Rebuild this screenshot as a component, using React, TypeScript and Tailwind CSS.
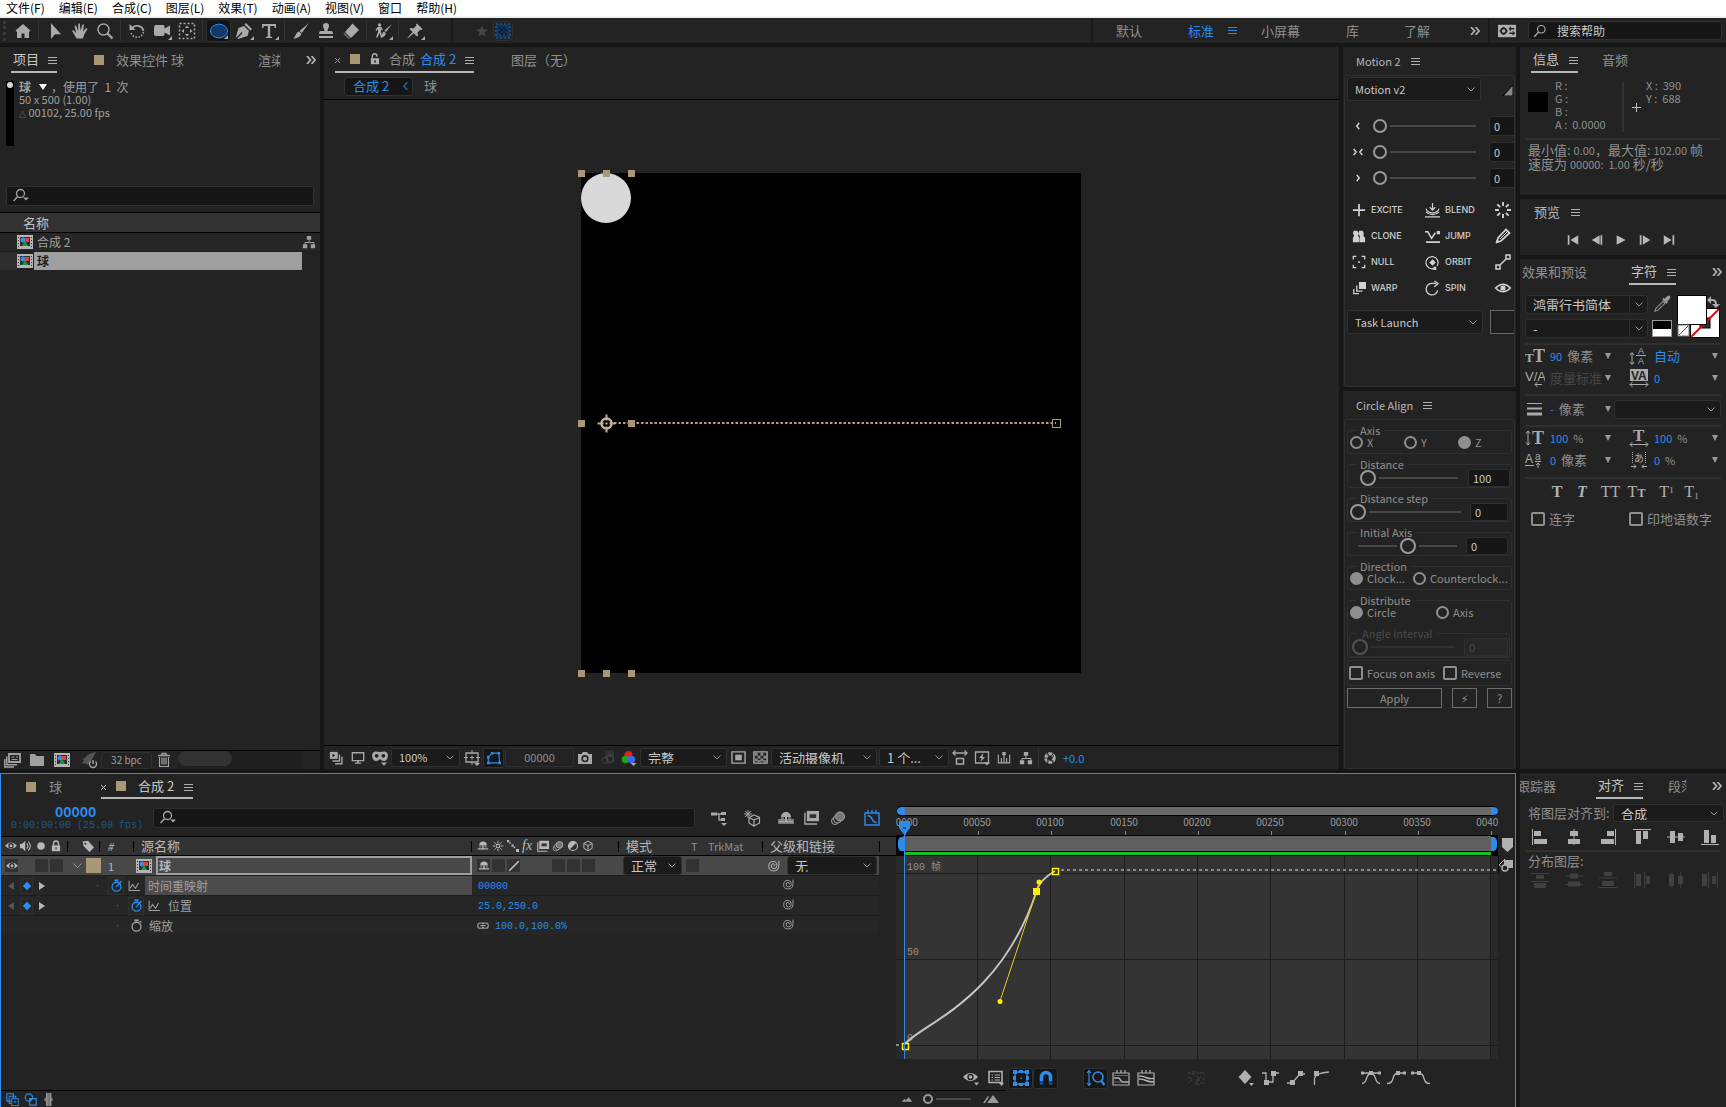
import type { ReactNode } from 'react';

const S = { fill: 'none', stroke: 'currentColor' };

const filmIcon = (
  <>
    <path d="M0 1h16v14H0z" fill="#b4b4b4" />
    <path d="M1 3h1v1H1zM1 6h1v1H1zM1 9h1v1H1zM1 12h1v1H1zM14 3h1v1h-1zM14 6h1v1h-1zM14 9h1v1h-1zM14 12h1v1h-1z" fill="#333" />
    <path d="M3 3h10v9H3z" fill="#2a3038" />
    <circle cx="6" cy="6" r="2.500" fill="#3c8be0" />
    <path d="M8 4h4v4H8z" fill="#e04038" />
    <path d="M5 12l3-5 3 5z" fill="#1e9a34" />
  </>
);

const shyIcon = (
  <>
    <path d="M3 7a5 5 0 0110 0z" />
    <path d="M7 7h2v5H7zM1 11h14v1.500H1z" />
    <path d="M4 8.500v2M12 8.500v2M3 8h3M10 8h3" {...S} />
  </>
);

const balls = (
  <>
    <circle cx="5" cy="11" r="3.500" {...S} />
    <circle cx="7.500" cy="9" r="4" fill="#232323" stroke="currentColor" />
    <circle cx="10" cy="6.500" r="4.500" fill="#777" stroke="currentColor" />
  </>
);

const cube = <path d="M8 1.500l5.500 3v6.500L8 14.500 2.500 11V4.500zM2.500 4.500L8 7.500l5.500-3M8 7.500v7" {...S} strokeWidth="1.300" />;

// All icons share a 16 unit box
const icons: Record<string, ReactNode> = {
  home: <path d="M8 1L.500 7.500 2 9v6h4.500v-4.500h3V15H14V9l1.500-1.500z" />,
  arrow: <path d="M4 0v16l4-4.700H14z" />,
  hand: <path d="M4.500 15.500L.500 8.500c-.5-1 .8-1.600 1.600-.7L4.400 10.500 2.600 3.500c-.2-1.200 1.300-1.500 1.700-.3L6.200 8 6.300 1.200c.1-1.200 1.500-1.200 1.600 0L8.600 7.700 10.300 2c.4-1.100 1.800-.7 1.600.4L11 8.800 13.700 5.600c.8-.8 2 0 1.400 1L12 12l-1 3.500z" />,
  zoom: <><circle cx="6.500" cy="6.500" r="5.500" {...S} strokeWidth="1.400" /><path d="M10.500 10.500l5 5" {...S} strokeWidth="2.200" /></>,
  rotate: <><path d="M2.500 6A6.500 6.500 0 0114.500 8" {...S} strokeWidth="1.700" /><path d="M14.500 9A6.500 6.500 0 012 10" {...S} strokeWidth="1.500" strokeDasharray="1.500 1.500" /><path d="M.500 1v6h6z" /></>,
  camera: <path d="M0 4q0-2 2-2h7q1.500 0 1.500 2v1.500L16 2.500v10l-5.500-3V11q0 2-1.500 2H2q-2 0-2-2z" />,
  panBehind: <><path d="M.5.500h15v15H.500z" {...S} strokeWidth="1.500" strokeDasharray="2 2" /><path d="M8 2.500l2 2.500H6zM8 13.500l2-2.500H6zM2.500 8l2.500-2v4zM13.500 8l-2.500-2v4z" /></>,
  ellipse: <ellipse cx="8" cy="8" rx="8.500" ry="6.800" fill="#12396b" stroke="#2d8ceb" />,
  pen: <path d="M10 0l6 6-1.500 1.500-6-6zM8 3L13 8l-1.500 5L2 16l-.6-.6L6.500 10l-.8-1L.6 14.500 0 14l2.500-9z" />,
  type: <path d="M1 1h14v4h-1.300l-.5-2H9.200v10.500l2 .4V15H4.800v-1.100l2-.4V3H2.800l-.5 2H1z" />,
  brush: <path d="M16 0L8.800 10 6.500 8zM6 8.500l2.300 2C8 14 4 15.500 0 15.500 3 13.500 2.500 9.500 6 8.500z" />,
  stamp: <path d="M8 0a3 3 0 013 3c0 1.800-1.500 2.500-1.500 5H13q2 0 2 3H1q0-3 2-3h3.500C6.500 5.500 5 4.800 5 3a3 3 0 013-3zM1 13h14v2H1z" />,
  eraser: <><path d="M9.500.500L16 7l-8 8L2 9z" /><path d="M1.500 9.500l6 6-2.200.3L.3 11z" fill="#666" /></>,
  roto: <><circle cx="4.500" cy="2" r="1.700" /><path d="M2.500 4h4l1.500 3-1 .6L6 6v3l1.500 5.500H6L4.500 10l-2 4.500H1L3 9V6L1.500 8 .500 7z" /><path d="M17 1L11 9 9.300 7.500zM9 8.500l1.700 1.500c0 2.800-2.500 4.500-5 4.500 1.700-1.500 1-5 3.300-6z" /></>,
  pin: <path d="M10 .500l5.500 5.500-1 1-1.200-.3L10.500 9.500 11 12.500l-1 1L6.700 10.200 1 15.200l-.5-.5L5.600 9 2.500 6l1-1 3 .5L9.300 2.700 9 1.500z" />,
  star: <path d="M8 .500l2.200 5.200 5.600.4-4.300 3.600 1.400 5.500L8 12.200l-4.900 3 1.400-5.500L.2 6.100l5.600-.4z" />,
  checker: <><path d="M1 1h14v14H1z" fill="#14345a" /><path d="M1 1h14v14H1z" {...S} strokeWidth="2" strokeDasharray="2 2" /><path d="M4 4h2v2H4zM8 4h2v2H8zM6 6h2v2H6zM10 6h2v2h-2zM4 8h2v2H4zM8 8h2v2H8zM6 10h2v2H6zM10 10h2v2h-2z" fill="#0c1c30" /></>,
  sync: <><path d="M0 2.500h16v11H0z" /><circle cx="5" cy="8" r="2.300" fill="none" stroke="#232323" strokeWidth="1.500" /><path d="M5 4.500v1M5 10.500v1M1.500 8h1M7.500 8h1" stroke="#232323" strokeWidth="1.500" /><path d="M10 6h4.500M10 10h4.500" stroke="#232323" strokeWidth="1.300" /><path d="M11.500 4.300L10 6l1.500 1.700M13 8.300l1.500 1.700-1.500 1.700" stroke="#232323" fill="none" /></>,
  search: <><circle cx="9.500" cy="6" r="4.300" {...S} strokeWidth="1.300" /><path d="M6.500 9l-5 5.500" {...S} strokeWidth="1.600" /></>,
  searchMenu: <><circle cx="7.500" cy="5.500" r="4" {...S} strokeWidth="1.300" /><path d="M4.700 8.500L.500 13" {...S} strokeWidth="1.500" /><path d="M10 9.500h6l-3 3z" /></>,
  film: filmIcon,
  flow: <path d="M5.500 1h5v4.500h-5zM1 10.500h5V15H1zM10 10.500h5V15h-5zM7.500 5.500h1V8H14v2.500h-1V9H4v1.500H3V8h4.500z" />,
  footage: <><path d="M5 2h11v8H5z" {...S} strokeWidth="1.800" /><path d="M7.500 5h3M12 5h2M7.500 7.500h6" {...S} /><path d="M2.800 4.500v8.200H13M.8 7v8H10" {...S} strokeWidth="1.500" /></>,
  folder: <path d="M1 2h5l1.500 2H15v10H1z" />,
  rocket: <><path d="M15 0C9 1 6 3 4 6L1 7l2 1-2 4 3-1 2 2 4-4z" fill="#555" /><path d="M9.500 9.500a3.500 3.500 0 105 0M12 8v4" {...S} strokeWidth="1.500" /></>,
  trash: <><path d="M2 3.500h12M6 3V1.500h4V3" {...S} strokeWidth="1.300" /><path d="M3.500 5v9.500h9V5M6 5.500v7M8 5.500v7M10 5.500v7" {...S} strokeWidth="1.200" /></>,
  unlock: <><path d="M2.500 7h11v8h-11z" /><path d="M4.500 7V4a3 3 0 016 0v1" {...S} strokeWidth="1.800" /><path d="M7 9.500h2v3H7z" fill="#232323" /></>,
  lock: <><path d="M2.500 7h11v8h-11z" /><path d="M4.800 7V4.500a3.200 3.200 0 016.400 0V7" {...S} strokeWidth="1.800" /><path d="M7.300 9.500h1.500v3H7.300z" fill="#333" /></>,
  playStack: <><path d="M1 1h9v8H1z" /><path d="M4 3v4l3-2z" fill="#232323" /><path d="M12 4v7.500H4M14.800 6.500v8H7" {...S} strokeWidth="1.600" /></>,
  monitor: <><path d="M1.500 2h13v9h-13z" {...S} strokeWidth="1.500" /><path d="M7 11h2v2h2.500v1.500h-7V13H7z" /></>,
  mask: <><path d="M0 5q1-4 4-3.500 4 .8 8 0 3-.5 4 3.500-.5 6-4 6-2.500 0-4-2-1.500 2-4 2-3.500 0-4-6z" /><circle cx="4.700" cy="5.800" r="1.900" fill="#232323" /><circle cx="11.300" cy="5.800" r="1.900" fill="#232323" /><path d="M9 12.500h6l-3 3.300z" /></>,
  safeZones: <><path d="M2 3h12v9H2z" {...S} strokeWidth="1.300" /><path d="M8 0v4M8 11v4M0 7.500h4M12 7.500h4M6 7.500h4M8 5.500v4" {...S} /><path d="M10 13h6l-3 3z" /></>,
  maskPath: <><path d="M1.500 13.500V7L6 2.500h7.500l1 11z" {...S} strokeWidth="1.300" /><path d="M0 5.500h3v3H0zM4.500 1h3v3h-3zM12 1h3v3h-3zM0 12h3v3H0zM13 12h3v3h-3z" /></>,
  snapshot: <><path d="M1 4h3.500L6 2h4l1.500 2H15v10H1z" /><circle cx="8" cy="8.700" r="2.800" fill="none" stroke="#232323" strokeWidth="1.600" /></>,
  showSnapshot: <><path d="M6 1h9v6H6z" fill="#333" /><circle cx="6" cy="10.500" r="3" {...S} /><circle cx="11" cy="9" r="3.500" {...S} strokeWidth="1.500" /></>,
  rgb: <><circle cx="7.500" cy="5" r="4" fill="#f01818" /><circle cx="4.500" cy="9.500" r="3.700" fill="#18a818" /><circle cx="10.500" cy="9.500" r="3.700" fill="#3c68f0" /><path d="M9.500 13h6l-3 3z" /></>,
  roi: <><path d="M1 2h14v12H1z" {...S} strokeWidth="1.500" /><path d="M4.500 5h7v6h-7z" /></>,
  grid: <><path d="M1 2h14v12H1z" {...S} strokeWidth="1.500" /><path d="M2 3h3v3H2zM8 3h3v3H8zM5 6h3v3H5zM11 6h3v3h-3zM2 9h3v3H2zM8 9h3v3H8zM5 11h3v2H5zM11 11h3v2h-3z" fill="#888" /></>,
  ratio: <><path d="M1 3h14M3.500.500L1 3l2.500 2.500M12.500.500L15 3l-2.500 2.500" {...S} strokeWidth="1.300" /><path d="M4.500 8.500h7v5.500h-7z" {...S} strokeWidth="1.500" /></>,
  fast: <><path d="M1.500 2h13v11h-13z" {...S} strokeWidth="1.300" /><path d="M9.500 3L5 8h2.500L6.500 12 11 7H8.500z" /><path d="M10 12.500h6l-3 3z" /></>,
  timelineBtn: <><path d="M1.500 4v9.500h13V4M5 8v5M8 5v8M11 8v5" {...S} strokeWidth="1.300" /><path d="M6 1h4v3L8 6 6 4z" /></>,
  aperture: <><circle cx="8" cy="8" r="5.500" {...S} strokeWidth="4.500" strokeDasharray="4.800 1" /><path d="M3 3l4 2M13 4l-2 4M13 12l-5-1M4 13l1-5" stroke="#232323" /></>,
  chainLeft: <path d="M10 3L6 8l4 5" {...S} strokeWidth="2.500" />,
  chainRight: <path d="M6 3l4 5-4 5" {...S} strokeWidth="2.500" />,
  chainBoth: <path d="M1 3l4 5-4 5M15 3l-4 5 4 5" {...S} strokeWidth="2.500" />,
  plus: <path d="M8 1v14M1 8h14" {...S} strokeWidth="2" />,
  blend: <><path d="M8 0v7M5 4.500l3 3 3-3M1 6c2 6 12 6 14 0M1 9.500c4 4 10 4 14 0" {...S} strokeWidth="1.300" /><path d="M0 14h16v1.500H0z" /></>,
  burst: <path d="M8 0v4M8 12v4M0 8h4M12 8h4M2.300 2.300l2.900 2.900M10.800 10.800l2.900 2.900M2.300 13.700l2.900-2.900M10.800 5.200l2.900-2.900" {...S} strokeWidth="1.900" />,
  clone: <path d="M8 2h4l1.500 3L13 8l2 2v5H9V8L7.500 6zM2 2h4l1.500 2.500L7 8l1.500 2v5H1v-5l1.500-2L1 4.500z" />,
  jump: <><path d="M0 3h3l4 7 4-6" {...S} strokeWidth="1.600" /><path d="M12.500 2H16v3.500h-3.500zM1 13h15v1.800H1z" /></>,
  pencil: <><path d="M2 14l1-4 8-8.500L14.500 5 6 13z" {...S} strokeWidth="1.800" /><path d="M5 11l7-7M1 15l3-1-2-2z" {...S} /></>,
  nullBox: <><path d="M1.500 5V1.500H5M11 1.500h3.500V5M14.500 11v3.500H11M5 14.500H1.500V11" {...S} strokeWidth="1.500" /><path d="M7 7h2v2H7z" /></>,
  orbit: <><path d="M10 14.200a6.500 6.500 0 113-2.500" {...S} strokeWidth="1.300" /><path d="M8 4.500L11.500 8 8 11.500 4.500 8zM9 12.500h3V16H9z" /></>,
  link2: <><path d="M1 11h4v4H1zM11 1h4v4h-4zM5 11l6-6" {...S} strokeWidth="1.500" /></>,
  warp: <><path d="M8 1h8v8H8z" /><path d="M5.500 5v6.500H12M2 9v5.500h6" {...S} strokeWidth="1.500" /></>,
  spin: <><path d="M13.500 10A6.200 6.200 0 118 2.500h4" {...S} strokeWidth="1.400" /><path d="M10 0l4 2.700L10 6" {...S} strokeWidth="1.400" /></>,
  eye: <><path d="M.5 8Q8 .500 15.500 8 8 15.500.500 8z" {...S} strokeWidth="1.400" /><circle cx="8" cy="8" r="2.600" /></>,
  eyeSolid: <><path d="M0 7.500Q8-1 16 7.500 8 16 0 7.500z" /><circle cx="8" cy="7.500" r="3.600" fill="#232323" /><circle cx="8" cy="7.500" r="2" /></>,
  eyeMenu: <><path d="M0 7Q7.500-1 15 7 7.500 15 0 7z" /><circle cx="7.500" cy="7" r="3.200" fill="#232323" /><circle cx="7.500" cy="7" r="1.800" /><path d="M11 12.500h5l-2.500 3z" /></>,
  first: <path d="M2 2.500h2v11H2zM14 2.500v11L5 8z" />,
  stepBack: <path d="M12 2.500h2v11h-2zM11 2.500v11L2 8z" />,
  play: <path d="M3 2.500v11L13.500 8z" />,
  stepFwd: <path d="M2 2.500h2v11H2zM5.500 2.500v11L14 8z" />,
  last: <path d="M12 2.500h2v11h-2zM2 2.500v11L11 8z" />,
  dropper: <><path d="M10 3.500L12.500 1q1.500-1 2.500 0t0 2.500L12.500 6l.8.800-1.500 1.500L7.700 4.200l1.500-1.500z" /><path d="M8.500 6l1.800 1.800L3.500 14.500l-2.500.8.700-2.600z" {...S} /></>,
  speaker: <><path d="M0 5h3l4-4v14l-4-4H0z" /><path d="M9 4.500q3 3.500 0 7M11 2q5.500 6 0 12" {...S} strokeWidth="1.400" /></>,
  dot: <circle cx="8" cy="8" r="5" />,
  tag: <><path d="M1 2l7-1 8 9-6 6-8-8z" /><circle cx="4.500" cy="5" r="1.300" fill="#333" /></>,
  shy: shyIcon,
  sun: <><circle cx="8" cy="8" r="2.500" {...S} strokeWidth="1.500" /><path d="M8 1v3M8 12v3M1 8h3M12 8h3M3 3l2 2M11 11l2 2M3 13l2-2M11 5l2-2" {...S} strokeWidth="1.300" /></>,
  dashes: <path d="M0 0h3v3H0zM3 3h2v2H3zM6 6h3v3H6zM9 9h2v2H9zM12 12h4v4h-4z" />,
  frames: <><path d="M3 1h13v11H3z" /><path d="M6 4.500h7v4H6z" fill="#333" /><path d="M1 3v12h13" {...S} strokeWidth="1.500" /></>,
  balls,
  half: <><circle cx="8" cy="8" r="6" {...S} strokeWidth="1.500" /><path d="M12.500 3.500A6 6 0 103.500 12.500z" /></>,
  cube,
  slash: <path d="M1.500 14.500l13-13" {...S} strokeWidth="2" />,
  spiral: <path d="M14.500 1v6q0 7.500-7 7.500T1 8q0-6 6-6 5 0 5 5.500 0 4-4 4Q4.500 11.500 4.500 8T7.500 5q1.800.2 1.500 3" {...S} strokeWidth="1.300" />,
  stopwatch: <><circle cx="8" cy="9.500" r="5.500" {...S} strokeWidth="1.600" /><path d="M5.500.500h5V3h-5z" /><path d="M12 2.500l2 2" {...S} strokeWidth="1.500" /></>,
  stopwatchOn: <><circle cx="8" cy="9.500" r="5.500" {...S} strokeWidth="1.600" /><path d="M5.500.500h5V3h-5z" /><path d="M7.500 10L14 2.500" {...S} strokeWidth="1.600" /></>,
  curve: <path d="M1.500 1v13H16M3 11l3-5 4 5 4-7" {...S} strokeWidth="1.400" />,
  link: <path d="M9 5.500Q8 4 6 4H4Q1 4 1 7.500T4 11h2q2 0 3-1.500M7 9.500Q8 11 10 11h2q3 0 3-3.500T12 4h-2Q8 4 7 5.500M4.500 7.500h7" {...S} strokeWidth="1.600" />,
  miniFlow: <><path d="M0 2.500h6v3H0zM10 2h5v3h-5zM10 8h4v3h-4z" /><path d="M6 4h4M8 4v6h3" {...S} strokeWidth="1.300" /><path d="M10 13h6l-3 3z" /></>,
  draft: <><path d="M4 0v8M0 4h8M1 1l6 6M1 7l6-6" {...S} /><path d="M10 5l5.500 2.500v5.500L10 16l-5-3V7.500zM5 7.500l5 2.500 5.500-2.500M10 10v6" {...S} strokeWidth="1.200" /></>,
  shyBar: <><path d="M0 9h16v5H0z" fill="#777" />{shyIcon}</>,
  graphEd: <><path d="M1 3h14v12H1zM4 0v3M8 0v3M12 0v3" {...S} strokeWidth="1.400" /><path d="M3.500 5.500Q7 6 8 9t4.500 3.500" {...S} strokeWidth="1.400" /></>,
  list: <><path d="M1 1.500h13v11H1z" {...S} strokeWidth="1.600" /><path d="M3.500 5h1.500M6.500 5H12M3.500 7.500H5M6.500 7.500H12M3.500 10H5M6.500 10H12" {...S} /><path d="M11 13h5l-2.500 3z" /></>,
  bbox: <><path d="M2 2h12v12H2z" {...S} strokeWidth="1.300" /><path d="M0 0h4v4H0zM6 0h4v3H6zM12 0h4v4h-4zM0 6h3v4H0zM13 6h3v4h-3zM0 12h4v4H0zM6 13h4v3H6zM12 12h4v4h-4zM7.500 7.500h1.500v1.500H7.500z" /></>,
  magnet: <><path d="M3.500 11V7a4.500 4.500 0 019 0v4" {...S} strokeWidth="3.600" /><path d="M1.700 11h3.600v4H1.700zM10.700 11h3.600v4h-3.600z" fill="#174a80" /></>,
  autoZoom: <><path d="M1 1v14M-1 3l2-2.500L3 3M-1 13l2 2.500L3 13" {...S} strokeWidth="1.200" /><circle cx="10" cy="7" r="5" {...S} strokeWidth="1.600" /><path d="M13.500 11l3 4" {...S} strokeWidth="2.200" /></>,
  fitSel: <><path d="M0 3h16v12H0zM4 0v3M8 0v3M12 0v3" {...S} strokeWidth="1.200" /><path d="M1 8h5l3 4h7" {...S} strokeWidth="1.400" /><path d="M1 5.500h15M1 12h8" stroke="#666" /></>,
  fitAll: <><path d="M0 3h16v12H0zM4 0v3M8 0v3M12 0v3" {...S} strokeWidth="1.200" /><path d="M1 6q4 0 7 1.500t8 1M1 9q4 0 7 1.500t8 1.500" {...S} strokeWidth="1.400" /></>,
  separate: <path d="M-1 3h4M4 1l3 4M7 1L4 5M8 3h9M-1 8q3-2 5 1M9 6l2 3 2-3M11 9v2M14 9h3M0 13l4-3M7 10h4l-4 4h4M12 13h5" {...S} />,
  diamond: <><path d="M7 0l6.500 7L7 14 .500 7z" /><path d="M11 13h5l-2.500 3z" /></>,
  kHold: <><path d="M-1 3h4v9h4M7 12h3V3h6" {...S} strokeWidth="1.300" /><path d="M1 10h5v5H1zM8 1h5v5H8z" /></>,
  kLinear: <><path d="M-1 13h5L12 4h5" {...S} strokeWidth="1.300" /><path d="M2 10h5v5H2zM10 1h5v5h-5z" /></>,
  kBezier: <><path d="M1.500 15V8Q3 3 16 2" {...S} strokeWidth="1.300" /><path d="M1 1h5v5H1z" /></>,
  easy: <><path d="M-2 3h20M-1 13.500q3 0 4.500-5T8 3.500t4.500 5 4.500 5" {...S} strokeWidth="1.300" /><path d="M6 1h4v4H6zM-2 1.500h3v3h-3zM15 1.500h3v3h-3z" /></>,
  easeIn: <><path d="M-1 13.500q5 0 6-5t5-5.500h7" {...S} strokeWidth="1.300" /><path d="M8 1h4v4H8zM15 1.500h3v3h-3z" /></>,
  easeOut: <><path d="M17 13.500q-5 0-6-5T6 3H-1" {...S} strokeWidth="1.300" /><path d="M4 1h4v4H4zM-2 1.500h3v3h-3z" /></>,
  swPanel: <><path d="M1 1h8v9H1zM4 4h8v9H4z" {...S} strokeWidth="1.300" /><path d="M7 7h8v8.500H7z" fill="#161616" stroke="currentColor" strokeWidth="1.300" /><path d="M11 9v4M9 11h4" {...S} /></>,
  modePanel: <><circle cx="6" cy="5.500" r="4.500" {...S} strokeWidth="1.400" /><path d="M7 7h8v8H7z" {...S} strokeWidth="1.400" /><path d="M7 7h3.500L7 10z" /></>,
  inOut: <><path d="M5 0h6v5l3 3-3 3v5H5v-5L2 8l3-3z" fill="#777" /><path d="M5 0h1.500v16H5zM10 0h1.500v16H10z" /></>,
  alLeft: <path d="M0 0h1v16H0zM2 2h7v5H2zM2 10h13v5H2z" />,
  alCenter: <path d="M7.500 0h1v16h-1zM4 2h8v5H4zM2 10h12v5H2z" />,
  alRight: <path d="M15 0h1v16h-1zM7 2h7v5H7zM1 10h13v5H1z" />,
  alTop: <path d="M-1 0h18v1H-1zM2 2h5v13H2zM9 2h5v8H9z" />,
  alMid: <path d="M-1 7.500h18v1H-1zM2 2h5v12H2zM10 4h5v8h-5z" />,
  alBottom: <path d="M-1 15h18v1H-1zM2 1h5v13H2zM9 6h5v8H9z" />,
  diTop: <path d="M-1 1h18v1H-1zM4 3h8v4H4zM-1 9h18v1H-1zM2 11h12v5H2z" />,
  diMid: <path d="M-1 3.500h18v1H-1zM4 1.500h8v5H4zM-1 12h18v1H-1zM2 9.500h12v5H2z" />,
  diBottom: <path d="M4 0h8v4H4zM-1 5.500h18v1H-1zM2 9h12v5H2zM-1 15h18v1H-1z" />,
  diLeft: <path d="M0 0h1v16H0zM2 2h5v12H2zM10 0h1v16h-1zM12 4h4v8h-4z" />,
  diCenter: <path d="M3.500 0h1v16h-1zM1 2h5v12H1zM12 0h1v16h-1zM10 4h5v8h-5z" />,
  diRight: <path d="M0 2h5v12H0zM6 0h1v16H6zM10 4h4v8h-4zM15 0h1v16h-1z" />,
  hillSmall: <path d="M2 11l3-3 2 1 3-3 4 5z" />,
  hillBig: <path d="M0 12L5 5l1 1-4 6zM4 12l6-8 6 8z" />,
};

function Icon({ name, className = 'size-4' }: { name: string; className?: string }) {
  return (
    <svg viewBox="0 0 16 16" fill="currentColor" className={`shrink-0 overflow-visible ${className}`} aria-hidden="true">
      {icons[name]}
    </svg>
  );
}

function MenuLines({ className = 'text-[#b0b0b0]' }: { className?: string }) {
  return (
    <svg width="9" height="9" viewBox="0 0 9 9" className={`shrink-0 ${className}`} aria-hidden="true">
      <path d="M0 1.500h9M0 4.500h9M0 7.500h9" stroke="currentColor" />
    </svg>
  );
}

const tabLines = 'mt-[3px] text-[#b0b0b0]';

function More() {
  return (
    <svg width="10" height="8" viewBox="0 0 10 8" className="shrink-0 text-[#b0b0b0]" aria-hidden="true">
      <path d="M1 0l3.500 4L1 8M5.500 0L9 4 5.500 8" fill="none" stroke="currentColor" strokeWidth="1.800" />
    </svg>
  );
}

function Close() {
  return (
    <svg width="5" height="5" viewBox="0 0 5 5" className="mt-[3px] mr-[10px] shrink-0" aria-hidden="true">
      <path d="M0 0l5 5M5 0L0 5" stroke="currentColor" />
    </svg>
  );
}

function Swatch() {
  return <span className="size-[10px] shrink-0 bg-[#a99776]" />;
}

function Tool({ name, corner, active }: { name: string; corner?: boolean; active?: boolean }) {
  return (
    <button aria-label={name} className={`relative flex h-[23px] w-[25px] items-center justify-center rounded-sm ${active ? 'border border-[#303030] bg-[#141414]' : ''}`}>
      <Icon name={name} />
      {corner && <span className="absolute right-[2px] bottom-[2px] border-b-[4px] border-l-[4px] border-b-[#aaa] border-l-transparent" />}
    </button>
  );
}

interface SelectProps {
  value: string;
  label: string;
  className: string;
  divider?: boolean;
}

function Select({ value, label, className, divider }: SelectProps) {
  return (
    <div className={`relative shrink-0 rounded-[3px] border border-[#303030] bg-[#1b1b1b] text-[#c8c8c8] ${className}`}>
      <select aria-label={label} className="block h-full w-full appearance-none bg-transparent pl-[7px] leading-none outline-none">
        <option>{value}</option>
      </select>
      <span className={`pointer-events-none absolute inset-y-0 right-0 flex w-[18px] items-center justify-center ${divider ? 'border-l border-[#303030]' : ''}`}>
        <svg width="8" height="5" viewBox="0 0 8 5" aria-hidden="true">
          <path d="M.5.500L4 4 7.500.500" fill="none" stroke="#999" />
        </svg>
      </span>
    </div>
  );
}

function Slider({ label, value, className, disabled }: { label: string; value: number; className: string; disabled?: boolean }) {
  return (
    <input
      type="range"
      aria-label={label}
      defaultValue={value}
      disabled={disabled}
      className={`m-0 h-4 shrink-0 appearance-none overflow-hidden bg-transparent disabled:opacity-40 [&::-webkit-slider-runnable-track]:h-[2px] [&::-webkit-slider-runnable-track]:bg-[#484848] [&::-webkit-slider-thumb]:appearance-none [&::-webkit-slider-thumb]:rounded-full [&::-webkit-slider-thumb]:border-2 [&::-webkit-slider-thumb]:border-[#999] [&::-webkit-slider-thumb]:bg-[#232323] [&::-webkit-slider-thumb]:shadow-[0_0_0_3px_#232323] ${className}`}
    />
  );
}

const thumbSmall = '[&::-webkit-slider-thumb]:mt-[-6px] [&::-webkit-slider-thumb]:size-[14px]';
const thumbLarge = '[&::-webkit-slider-thumb]:mt-[-7px] [&::-webkit-slider-thumb]:size-4';

function NumberBox({ label, value, className, disabled }: { label: string; value: string; className: string; disabled?: boolean }) {
  return (
    <input
      type="text"
      aria-label={label}
      defaultValue={value}
      disabled={disabled}
      className={`shrink-0 rounded-[3px] border border-[#2f2f2f] bg-[#161616] pl-[4px] text-[11px] leading-none text-[#c8c8c8] outline-none disabled:bg-[#272727] disabled:text-[#4a4a4a] ${className}`}
    />
  );
}

function Radio({ group, label, checked, className = '' }: { group: string; label: string; checked?: boolean; className?: string }) {
  return (
    <label className={`flex shrink-0 items-center gap-1 ${className}`}>
      <input type="radio" name={group} defaultChecked={checked} className="size-[13px] appearance-none rounded-full border-2 border-[#8f8f8f] checked:bg-[#8f8f8f]" />
      {label}
    </label>
  );
}

function Check({ label, className = '' }: { label: string; className?: string }) {
  return (
    <label className={`flex shrink-0 items-center gap-1 ${className}`}>
      <input type="checkbox" className="size-[14px] appearance-none rounded-[2px] border-2 border-[#8f8f8f]" />
      {label}
    </label>
  );
}

function Group({ title, className = 'h-[30px]', children, disabled }: { title: string; className?: string; children: ReactNode; disabled?: boolean }) {
  return (
    <fieldset className={`min-w-0 rounded-[3px] border border-[#303030] ${disabled ? 'text-[#4a4a4a]' : ''} ${className}`}>
      <legend className="ml-2 px-1 leading-3">{title}</legend>
      {children}
    </fieldset>
  );
}

function MenuBar() {
  const menus = ['文件(F)', '编辑(E)', '合成(C)', '图层(L)', '效果(T)', '动画(A)', '视图(V)', '窗口', '帮助(H)'];
  return (
    <nav className="flex h-[18px] shrink-0 items-center gap-[14px] border-b-2 border-[#f0f0f0] bg-white pl-[6px] text-[12px] leading-4 text-black">
      {menus.map((m) => (
        <button key={m}>{m}</button>
      ))}
    </nav>
  );
}

function Sep() {
  return <span className="mx-[3px] h-[21px] w-px bg-[#333]" />;
}

function ToolBar() {
  return (
    <div className="flex h-[25px] shrink-0 items-center bg-[#232323] text-[#aaa]">
      <span className="mr-1 ml-[3px] h-5 border-l-[3px] border-dotted border-[#3a3a3a]" />
      <Tool name="home" />
      <Sep />
      <Tool name="arrow" />
      <Tool name="hand" />
      <Tool name="zoom" />
      <Sep />
      <Tool name="rotate" />
      <Tool name="camera" corner />
      <Tool name="panBehind" />
      <Sep />
      <Tool name="ellipse" corner active />
      <Tool name="pen" corner />
      <Tool name="type" corner />
      <Sep />
      <Tool name="brush" />
      <Tool name="stamp" />
      <Tool name="eraser" />
      <Sep />
      <Tool name="roto" corner />
      <Sep />
      <Tool name="pin" corner />
      <span className="ml-6 h-[25px] w-[2px] bg-[#1a1a1a]" />
      <button aria-label="star" className="ml-[23px] text-[#444]"><Icon name="star" className="size-3" /></button>
      <button aria-label="checker" className="ml-[5px] flex size-5 items-center justify-center rounded-sm border border-[#303030] text-[#1d4a7c]"><Icon name="checker" /></button>

      <div className="ml-auto flex h-full items-center text-[#8f8f8f]">
        <span className="mr-[23px] h-full w-[2px] bg-[#1a1a1a]" />
        <button className="mr-[46px]">默认</button>
        <button className="mr-[14px] text-[#2d8ceb]">标准</button>
        <MenuLines className="mr-6 text-[#2d8ceb]" />
        <button className="mr-[46px]">小屏幕</button>
        <button className="mr-[45px]">库</button>
        <button className="mr-10">了解</button>
        <More />
        <span className="mx-[8px] h-full w-[2px] bg-[#1a1a1a]" />
        <Icon name="sync" className="size-[18px] text-[#b0b0b0]" />
        <label className="mr-1 ml-3 flex h-[19px] w-[194px] items-center gap-[10px] rounded-[3px] border border-[#303030] bg-[#161616] pl-[4px] text-[12px] text-[#b0b0b0]">
          <Icon name="search" className="size-[14px]" />
          <input aria-label="搜索帮助" placeholder="搜索帮助" className="w-full bg-transparent outline-none placeholder:text-[#c8c8c8]" />
        </label>
      </div>
    </div>
  );
}

function ProjectPanel() {
  return (
    <section className="flex w-80 shrink-0 flex-col bg-[#232323]">
      <div className="flex h-[26px] items-center pl-[11px] text-[#8f8f8f]">
        <button className="flex h-full w-[46px] items-center justify-between border-b-2 border-[#b8b8b8] pl-[2px] text-[#c8c8c8]">项目<MenuLines className={tabLines} /></button>
        <button className="ml-[37px] flex items-center gap-3"><Swatch />效果控件 球</button>
        <button className="ml-[74px] w-[23px] overflow-hidden border-r border-[#333] text-left whitespace-nowrap">渲染</button>
        <span className="ml-[25px]"><More /></span>
      </div>

      <div className="mt-2 flex h-[105px] gap-[5px] pl-[6px] text-[11px] leading-[13px] text-[#a0a0a0]">
        <div className="h-[65px] w-2 bg-black pt-px"><div className="mx-auto size-[6px] rounded-full bg-[#d8d8d8]" /></div>
        <div className="-mt-px">
          <p className="flex items-center text-[12px]">
            <b>球</b>
            <span className="mr-[4px] ml-[8px] border-x-[4px] border-t-[6px] border-x-transparent border-t-white" />
            ，使用了&nbsp; 1&nbsp; 次
          </p>
          <p>50 x 500 (1.00)</p>
          <p><span className="text-[7px]">△</span> 00102, 25.00 fps</p>
        </div>
      </div>

      <label className="mx-[6px] flex h-5 items-center rounded-[3px] border border-[#303030] bg-[#161616] pl-[6px] text-[#a0a0a0]">
        <Icon name="searchMenu" />
        <input aria-label="search project" className="w-full bg-transparent outline-none" />
      </label>

      <table className="mt-[6px] w-full text-left">
        <thead>
          <tr className="h-5 border-y border-black bg-[#323232] text-[#c0c0c0]">
            <th className="w-[17px]" />
            <th colSpan={2} className="pl-[6px] leading-4 font-normal">名称</th>
          </tr>
        </thead>
        <tbody className="text-[12px] leading-4 text-[#a0a0a0]">
          <tr className="h-[19px] border-b border-[#1e1e1e] bg-[#262626]">
            <td />
            <td><span className="flex items-center gap-1"><Icon name="film" /> 合成 2</span></td>
            <td className="w-[18px]"><Icon name="flow" className="size-[14px]" /></td>
          </tr>
          <tr className="h-[18px]">
            <td className="bg-[#2e2e2e]" />
            <td className="p-0">
              <span className="flex h-[18px] items-center gap-[1px] font-bold text-[#1d1d1d]"><Icon name="film" /><span className="flex-1 bg-[#9f9f9f] pl-[3px] leading-[18px]">球</span></span>
            </td>
            <td />
          </tr>
        </tbody>
      </table>

      <div className="mt-auto flex h-[19px] items-center border-t border-black text-[#a0a0a0]">
        <button aria-label="footage" className="ml-1"><Icon name="footage" /></button>
        <button aria-label="folder" className="ml-[9px]"><Icon name="folder" /></button>
        <button aria-label="new comp" className="ml-[9px]"><Icon name="film" /></button>
        <button aria-label="rocket" className="ml-[11px]"><Icon name="rocket" /></button>
        <button className="ml-1 h-[17px] w-[51px] rounded-[3px] border border-[#303030] text-[10px] leading-none">32 bpc</button>
        <button aria-label="delete" className="ml-[4px]"><Icon name="trash" /></button>
        <div className="ml-[6px] h-full w-[125px] bg-[#1f1f1f]"><div className="h-[15px] w-[54px] rounded-full bg-[#333]" /></div>
      </div>
    </section>
  );
}

const handles = [[0, 0], [25, 0], [50, 0], [0, 250], [50, 250], [0, 500], [25, 500], [50, 500]];

function CompPanel() {
  return (
    <section className="flex min-w-0 flex-1 flex-col bg-[#232323]">
      <div className="flex h-[26px] items-center pl-[11px] text-[#8f8f8f]">
        <button className="flex h-full w-[139px] items-center border-b-2 border-[#b8b8b8] whitespace-nowrap">
          <Close />
          <Swatch />
          <Icon name="unlock" className="mr-2 ml-[9px] size-3 text-[#b0b0b0]" />
          合成
          <span className="mr-auto ml-[5px] text-[#2d8ceb]">合成 2</span>
          <MenuLines className={tabLines} />
        </button>
        <button className="ml-[37px]">图层（无）</button>
      </div>
      <div className="flex h-[27px] items-center border-b border-black pl-5 text-[#8f8f8f]">
        <button className="flex h-[19px] w-[69px] items-center justify-between rounded-[3px] border border-[#303030] bg-[#161616] pr-1 pl-[8px] whitespace-nowrap text-[#2d8ceb]">
          合成 2
          <svg width="5" height="8" viewBox="0 0 5 8" className="text-[#1d62a8]" aria-hidden="true"><path d="M4.500 0L1 4l3.500 4" fill="none" stroke="currentColor" strokeWidth="1.500" /></svg>
        </button>
        <button className="ml-[11px]">球</button>
      </div>

      <div className="flex flex-1 items-center justify-center overflow-hidden">
        <svg width="521" height="520" viewBox="-10 -10 521 520" className="shrink-0">
          <rect width="500" height="500" fill="#000" />
          <circle cx="25" cy="25" r="25" fill="#d8d8d8" />
          <path d="M33 250h442" stroke="#b5a27e" strokeWidth="2" strokeDasharray="2.500 2" />
          <rect x="471.500" y="246.500" width="8" height="8" fill="none" stroke="#a99776" />
          {handles.map(([x, y]) => (
            <rect key={`${x}-${y}`} x={x - 3} y={y - 3} width="7" height="7" fill="#a99776" />
          ))}
          <path d="M25.500 241.500v6M25.500 253.500v6M16.500 250.500h6M28.500 250.500h6" stroke="#b8b0a0" strokeWidth="2" />
          <circle cx="25.500" cy="250.500" r="5" fill="none" stroke="#c4b494" strokeWidth="2.500" />
          <rect x="24.500" y="249.500" width="2" height="2" fill="#c4b494" />
        </svg>
      </div>

      <div className="flex h-6 items-center border-t border-black pl-px text-[#a8a8a8]">
        <button aria-label="preview" className="flex w-[22px] justify-center"><Icon name="playStack" className="size-[14px]" /></button>
        <button aria-label="monitor" className="flex w-[22px] justify-center"><Icon name="monitor" className="size-[14px]" /></button>
        <button aria-label="vr" className="flex w-[22px] justify-center"><Icon name="mask" /></button>
        <Select label="zoom" value="100%" className="h-[19px] w-[69px] text-[11px]" />
        <button aria-label="safe zones" className="flex w-[23px] justify-center"><Icon name="safeZones" /></button>
        <button aria-label="mask path" className="mr-px flex h-5 w-[21px] items-center justify-center rounded-[3px] border border-[#303030] bg-[#161616] text-[#2d8ceb]"><Icon name="maskPath" className="size-[14px]" /></button>
        <button className="h-[19px] w-[69px] rounded-[3px] border border-[#303030] text-[11px] leading-none text-[#8f8f8f]">00000</button>
        <button aria-label="snapshot" className="flex w-[22px] justify-center"><Icon name="snapshot" /></button>
        <button aria-label="show snapshot" className="flex w-[22px] justify-center text-[#444]"><Icon name="showSnapshot" /></button>
        <button aria-label="channels" className="flex w-[22px] justify-center"><Icon name="rgb" /></button>
        <Select label="resolution" value="完整" className="h-[19px] w-[87px]" />
        <button aria-label="region" className="flex w-[22px] justify-center"><Icon name="roi" className="size-[15px]" /></button>
        <button aria-label="transparency" className="flex w-[22px] justify-center"><Icon name="grid" className="size-[15px]" /></button>
        <Select label="camera" value="活动摄像机" className="h-[19px] w-[106px]" />
        <Select label="views" value="1 个..." className="ml-[2px] h-[19px] w-[70px]" />
        <button aria-label="ratio" className="flex w-[22px] justify-center"><Icon name="ratio" /></button>
        <button aria-label="fast previews" className="flex w-[22px] justify-center"><Icon name="fast" /></button>
        <button aria-label="timeline" className="flex w-[22px] justify-center"><Icon name="timelineBtn" className="size-[14px]" /></button>
        <button aria-label="flowchart" className="flex w-[22px] justify-center"><Icon name="flow" className="size-[14px]" /></button>
        <span className="mx-px h-5 w-px bg-[#333]" />
        <button aria-label="exposure" className="flex w-[20px] justify-center"><Icon name="aperture" className="size-3" /></button>
        <span className="ml-[3px] text-[11px] text-[#2d8ceb]">+0.0</span>
      </div>
    </section>
  );
}

const motionTools = [
  ['plus', 'EXCITE', 'blend', 'BLEND', 'burst'],
  ['clone', 'CLONE', 'jump', 'JUMP', 'pencil'],
  ['nullBox', 'NULL', 'orbit', 'ORBIT', 'link2'],
  ['warp', 'WARP', 'spin', 'SPIN', 'eye'],
];

function MotionPanel() {
  return (
    <section className="flex h-[340px] flex-col bg-[#232323] text-[11px]">
      <h2 className="flex h-7 items-center gap-[10px] pl-[13px] text-[#b8b8b8]">Motion 2<MenuLines /></h2>
      <div className="mx-px flex-1 overflow-hidden rounded-[3px] border border-[#303030] pt-px pl-[2px]">
        <div className="flex items-center">
          <Select label="motion version" value="Motion v2" className="h-6 w-[134px]" />
          <svg width="10" height="11" viewBox="0 0 10 11" className="mt-[3px] ml-[22px]" aria-hidden="true"><path d="M10 0v11H0z" fill="#888" stroke="#000" /></svg>
        </div>
        <div className="mt-3 flex flex-col">
          {['chainLeft', 'chainBoth', 'chainRight'].map((n) => (
            <div key={n} className="flex h-[26px] items-center">
              <Icon name={n} className="ml-[6px] size-[10px] text-[#d0d0d0]" />
              <Slider label={n} value={0} className={`ml-[10px] w-[103px] ${thumbSmall}`} />
              <NumberBox label={`${n} value`} value="0" className="ml-[13px] h-5 w-7" />
            </div>
          ))}
        </div>
        <div className="mt-[6px] flex flex-col text-[#d0d0d0]">
          {motionTools.map(([a, aLabel, b, bLabel, c]) => (
            <div key={aLabel} className="flex h-[26px] items-center text-[9px] font-medium">
              <button className="flex w-[72px] items-center gap-[5px] pl-[5px] font-[Inter,sans-serif]"><Icon name={a} className="size-[14px]" />{aLabel}</button>
              <button className="flex w-[70px] items-center gap-[5px] pl-[6px] font-[Inter,sans-serif]"><Icon name={b} className="size-[15px]" />{bLabel}</button>
              <button aria-label={c} className="ml-[6px]"><Icon name={c} className="size-[16px]" /></button>
            </div>
          ))}
        </div>
        <div className="mt-[9px] flex gap-[7px]">
          <Select label="task" value="Task Launch" className="h-6 w-[136px]" />
          <button aria-label="task slot" className="h-6 w-8 shrink-0 border border-[#666] bg-[#1e1e1e]" />
        </div>
      </div>
    </section>
  );
}

function CircleAlignPanel() {
  return (
    <section className="mt-1 flex flex-1 flex-col bg-[#232323] text-[11px] text-[#8f8f8f]">
      <h2 className="flex h-7 items-center gap-[10px] pl-[13px] text-[#b8b8b8]">Circle Align<MenuLines /></h2>
      <div className="mx-px flex flex-1 flex-col gap-1 rounded-[3px] border border-[#303030] px-[2px] pt-1">
        <Group title="Axis">
          <div className="flex h-3 items-center pl-[2px]">
            <Radio group="axis" label="X" className="w-[54px]" />
            <Radio group="axis" label="Y" className="w-[54px]" />
            <Radio group="axis" label="Z" checked />
          </div>
        </Group>
        <Group title="Distance">
          <div className="flex h-4 items-center pl-3">
            <Slider label="Distance" value={0} className={`w-[98px] ${thumbLarge}`} />
            <NumberBox label="Distance value" value="100" className="ml-[10px] h-[18px] w-[42px]" />
          </div>
        </Group>
        <Group title="Distance step">
          <div className="flex h-4 items-center pl-[2px]">
            <Slider label="Distance step" value={0} className={`w-[111px] ${thumbLarge}`} />
            <NumberBox label="Distance step value" value="0" className="ml-[9px] h-[18px] w-[38px]" />
          </div>
        </Group>
        <Group title="Initial Axis">
          <div className="flex h-4 items-center pl-[10px]">
            <Slider label="Initial Axis" value={50} className={`w-[99px] ${thumbLarge}`} />
            <NumberBox label="Initial Axis value" value="0" className="ml-[9px] h-[18px] w-[42px]" />
          </div>
        </Group>
        <Group title="Direction">
          <div className="flex h-3 items-center pl-[2px]">
            <Radio group="direction" label="Clock..." checked className="w-[63px]" />
            <Radio group="direction" label="Counterclock..." />
          </div>
        </Group>
        <Group title="Distribute" className="h-[64px]">
          <div className="flex h-3 items-center pl-[2px]">
            <Radio group="distribute" label="Circle" checked className="w-[86px]" />
            <Radio group="distribute" label="Axis" />
          </div>
          <Group title="Angle interval" className="mx-px mt-[9px] h-[30px]" disabled>
            <div className="flex h-4 items-center pl-[2px]">
              <Slider label="Angle interval" value={0} disabled className={`w-[103px] ${thumbLarge}`} />
              <NumberBox label="Angle interval value" value="0" disabled className="ml-[9px] h-[18px] w-11" />
            </div>
          </Group>
        </Group>
        <div className="-mt-[2px] flex h-[26px] items-center rounded-[3px] border border-[#303030] pl-px">
          <Check label="Focus on axis" className="w-[94px]" />
          <Check label="Reverse" />
        </div>
        <div className="-mt-[2px] flex h-5 justify-between text-[#8f8f8f]">
          <button className="w-[95px] border border-[#6e6e6e] leading-none">Apply</button>
          <button className="w-[25px] border border-[#6e6e6e] leading-none">⚡︎</button>
          <button className="w-[25px] border border-[#6e6e6e] leading-none">?</button>
        </div>
      </div>
    </section>
  );
}

function InfoPanel() {
  return (
    <section className="h-[148px] bg-[#232323] text-[#8f8f8f]">
      <div className="flex h-[26px] items-center pl-[11px]">
        <button className="flex h-full w-[47px] items-center justify-between border-b-2 border-[#b8b8b8] pl-[2px] text-[#c8c8c8]">信息<MenuLines className={tabLines} /></button>
        <button className="ml-[24px]">音频</button>
      </div>
      <div className="mt-[6px] flex h-[59px] items-start pl-2 text-[11px] leading-[13px]">
        <div className="mt-[13px] h-5 w-5 bg-black" />
        <div className="ml-[7px] w-[67px]">
          <p>R :</p>
          <p>G :</p>
          <p>B :</p>
          <p>A :&nbsp;&nbsp;0.0000</p>
        </div>
        <div className="mt-[3px] h-[50px] w-[2px] bg-[#333]" />
        <svg width="9" height="9" viewBox="0 0 9 9" className="mt-[24px] ml-[8px]" aria-hidden="true"><path d="M4.500 0v9M0 4.500h9" stroke="#c0c0c0" /></svg>
        <div className="ml-[5px]">
          <p>X :&nbsp; 390</p>
          <p>Y :&nbsp; 688</p>
        </div>
      </div>
      <div className="mx-[6px] h-[2px] bg-[#303030]" />
      <div className="pt-[3px] pl-2 leading-[13px] whitespace-nowrap">
        <p>最小值: <span className="text-[11px]">0.00</span>，最大值: <span className="text-[11px]">102.00</span> 帧</p>
        <p>速度为 <span className="text-[11px]">00000:&nbsp; 1.00</span> 秒/秒</p>
      </div>
    </section>
  );
}

function PreviewPanel() {
  return (
    <section className="mt-1 h-[56px] bg-[#232323]">
      <h2 className="flex h-[26px] items-center gap-[11px] pl-[14px] text-[#b8b8b8]">预览<MenuLines /></h2>
      <div className="mt-[8px] flex gap-[10px] pl-[46px] text-[#b8b8b8]">
        {['first', 'stepBack', 'play', 'stepFwd', 'last'].map((n) => (
          <button key={n} aria-label={n}><Icon name={n} className="size-[14px]" /></button>
        ))}
      </div>
    </section>
  );
}

function Rule() {
  return <div className="h-[2px] bg-[#303030]" />;
}

interface CharFieldProps {
  glyph: ReactNode;
  value: string;
  unit?: string;
  muted?: boolean;
  second?: boolean;
}

function CharField({ glyph, value, unit, muted, second }: CharFieldProps) {
  return (
    <div className={`flex shrink-0 items-center whitespace-nowrap ${second ? 'ml-[18px] w-[89px]' : 'w-[86px]'}`}>
      <svg width="20" height="18" viewBox="0 0 20 18" fill="#aaa" className="mr-[5px] shrink-0" aria-hidden="true">{glyph}</svg>
      <span className={`${muted ? 'text-[#484848]' : 'text-[#2d8ceb]'} ${/^[0-9-]+$/.test(value) ? 'text-[11px]' : ''}`}>{value}</span>
      {unit && <span className={`ml-[5px] ${unit === '%' ? 'text-[11px]' : ''}`}>{unit}</span>}
      <span className="ml-auto border-x-[3px] border-t-[6px] border-x-transparent border-t-[#999]" />
    </div>
  );
}

const serifT = { fontFamily: '"Liberation Serif", serif', fontWeight: 700 };
const sansA = { fontFamily: '"Liberation Sans", sans-serif' };
const lines = { fill: 'none', stroke: '#aaa' };

const glyphs = {
  size: <><text x="0" y="15" fontSize="13" {...serifT}>T</text><text x="8" y="15" fontSize="18" {...serifT}>T</text></>,
  leading: <><text x="9" y="7" fontSize="9" {...sansA}>A</text><text x="9" y="17" fontSize="9" {...sansA}>A</text><path d="M7 8.500h10M3 6v11M1 8l2-2.500L5 8M1 15l2 2.500L5 15" {...lines} /></>,
  kern: <><text x="0" y="12" fontSize="13" {...sansA}>V/A</text><path d="M17 15.500h-7M12.500 13L10 15.500l2.500 2.500" {...lines} /></>,
  track: <><path d="M1 0h18v12H1z" /><text x="2" y="11" fontSize="12" fill="#232323" fontWeight="700" {...sansA}>VA</text><path d="M1 15.500h18M3.500 13L1 15.500 3.500 18M16.500 13l2.500 2.500-2.500 2.500" {...lines} /></>,
  strokeW: <path d="M2 3h15v1H2zM2 7.500h15v2H2zM2 12.500h15v3H2z" />,
  vScale: <><text x="7" y="15" fontSize="18" {...serifT}>T</text><path d="M3 2v14M1 4.500L3 2l2 2.500M1 13.500L3 16l2-2.500" {...lines} /></>,
  hScale: <><text x="4" y="12" fontSize="17" {...serifT}>T</text><path d="M1 15.500h18M3.500 13L1 15.500 3.500 18M16.500 13l2.500 2.500-2.500 2.500" {...lines} /></>,
  baseline: <><text x="0" y="12" fontSize="12" {...sansA}>A</text><text x="10" y="9" fontSize="10" {...sansA}>a</text><path d="M0 14.500h9M10 10.500h6M13 17v-5M11 14l2-2 2 2" {...lines} /></>,
  tsume: <><text x="5" y="11" fontSize="10">あ</text><path d="M3.500 1v11M16.500 1v11" {...lines} strokeDasharray="1 1" /><path d="M2 15.500h5M5 13.500l2 2-2 2M18 15.500h-5M15 13.500l-2 2 2 2" {...lines} /></>,
};

function CharacterPanel() {
  return (
    <section className="mt-1 flex flex-1 flex-col bg-[#232323] text-[#8f8f8f]">
      <div className="flex h-[26px] items-center pl-[2px]">
        <button className="w-[107px] text-left">效果和预设</button>
        <button className="flex h-full w-[47px] items-center justify-between border-b-2 border-[#b8b8b8] pl-[2px] text-[#c8c8c8]">字符<MenuLines className={tabLines} /></button>
        <span className="ml-9"><More /></span>
      </div>

      <div className="mx-[5px] mt-[10px] flex">
        <div className="flex flex-col gap-[5px]">
          <Select label="font family" value="鸿雷行书简体" divider className="h-[19px] w-[123px]" />
          <Select label="font style" value="-" divider className="h-[19px] w-[123px]" />
        </div>
        <div className="ml-[4px] flex w-5 flex-col items-center gap-2">
          <Icon name="dropper" className="size-[17px] text-[#999]" />
          <button aria-label="black and white" className="flex h-[17px] w-5 flex-col items-stretch justify-start border border-[#999] bg-white"><span className="h-[8px] bg-black" /></button>
        </div>
        <svg width="44" height="43" viewBox="0 0 44 43" className="ml-[5px]" aria-hidden="true">
          <rect x="13.500" y="13.500" width="29" height="29" fill="#fff" stroke="#000" />
          <rect x="23" y="23" width="10" height="10" fill="#333" stroke="#000" />
          <path d="M14 42L42 14" stroke="#d01010" strokeWidth="2" />
          <rect x=".5" y=".5" width="29" height="29" fill="#fff" stroke="#000" />
          <rect x="1" y="30" width="11" height="11" fill="#fff" stroke="#777" />
          <path d="M2 40l9-9" stroke="#c02020" />
          <path d="M33 5h2q4 0 4 4v2" fill="none" stroke="#aaa" strokeWidth="2" />
          <path d="M34 1v8l-4-4zM35 9h8l-4 4z" fill="#aaa" />
        </svg>
      </div>

      <div className="mx-[5px] mt-[5px] flex flex-col">
        <Rule />
        <div className="flex h-[22px] items-center"><CharField glyph={glyphs.size} value="90" unit="像素" /><CharField glyph={glyphs.leading} value="自动" second /></div>
        <div className="mb-[6px] flex h-[21px] items-center"><CharField glyph={glyphs.kern} value="度量标准" muted /><CharField glyph={glyphs.track} value="0" second /></div>
        <Rule />
        <div className="mb-[3px] flex h-[26px] items-center"><CharField glyph={glyphs.strokeW} value="-" unit="像素" /><Select label="stroke order" value="" className="ml-[3px] h-[19px] w-[107px]" /></div>
        <Rule />
        <div className="flex h-[22px] items-center"><CharField glyph={glyphs.vScale} value="100" unit="%" /><CharField glyph={glyphs.hScale} value="100" unit="%" second /></div>
        <div className="mb-[6px] flex h-[22px] items-center"><CharField glyph={glyphs.baseline} value="0" unit="像素" /><CharField glyph={glyphs.tsume} value="0" unit="%" second /></div>
        <Rule />
      </div>

      <div className="mt-[3px] flex h-5 items-center pl-[26px] font-['Liberation_Serif',serif] text-[16px] leading-none text-[#b0b0b0]">
        <button className="w-[22px] font-bold">T</button>
        <button className="ml-[3px] w-[22px] font-bold italic">T</button>
        <button className="ml-[5px] w-[25px]">TT</button>
        <button className="ml-px w-[25px]">T<span className="text-[12px] font-bold">T</span></button>
        <button className="ml-[5px] w-[25px]">T<sup className="text-[9px]">1</sup></button>
        <button className="w-[25px]">T<sub className="text-[9px]">1</sub></button>
      </div>
      <div className="mt-[7px] flex h-5 items-center pl-[11px]">
        <Check label="连字" className="w-[98px]" />
        <Check label="印地语数字" />
      </div>
    </section>
  );
}

function AlignPanel() {
  return (
    <section className="w-[206px] shrink-0 bg-[#232323] text-[#8f8f8f]">
      <div className="flex h-[26px] items-center">
        <button className="flex w-[76px] overflow-hidden"><span className="-ml-[3px]">跟踪器</span></button>
        <button className="flex h-full w-[47px] items-center justify-between border-b-2 border-[#b8b8b8] pl-[2px] text-[#c8c8c8]">对齐<MenuLines className={tabLines} /></button>
        <button className="ml-[25px] w-[19px] overflow-hidden border-r border-[#333] text-left whitespace-nowrap">段落</button>
        <span className="ml-[25px]"><More /></span>
      </div>
      <div className="mt-[5px] flex items-center pl-2">
        <span className="w-[85px] whitespace-nowrap">将图层对齐到:</span>
        <Select label="将图层对齐到" value="合成" className="h-[18px] w-[111px]" />
      </div>
      <div className="mt-[7px] flex gap-[18px] pl-3 text-[#b0b0b0]">
        {['alLeft', 'alCenter', 'alRight', 'alTop', 'alMid', 'alBottom'].map((n) => (
          <button key={n} aria-label={n}><Icon name={n} /></button>
        ))}
      </div>
      <div className="mx-[6px] mt-[5px] h-[2px] bg-[#303030]" />
      <p className="pl-2 leading-[18px]">分布图层:</p>
      <div className="mt-[2px] flex gap-[18px] pl-3 text-[#404040]">
        {['diTop', 'diMid', 'diBottom', 'diLeft', 'diCenter', 'diRight'].map((n) => (
          <button key={n} aria-label={n}><Icon name={n} /></button>
        ))}
      </div>
    </section>
  );
}

const cell = 'flex h-full shrink-0 items-center relative';
const bar = <span className="absolute right-0 h-[11px] w-px bg-black" />;
const box = 'flex size-[13px] items-center justify-center bg-[#323232]';

function PropertyRow({ label, value, indent, keyed, selected, linked }: { label: string; value: string; indent: string; keyed?: boolean; selected?: boolean; linked?: boolean }) {
  return (
    <div className="flex h-5 w-[878px] items-center border-t border-[#1e1e1e] bg-[#262626] text-[12px] text-[#a0a0a0]">
      <div className="flex w-12 items-center gap-[6px] pl-[7px]">
        {keyed && (
          <>
            <button aria-label="previous key" className="border-y-[4px] border-r-[6px] border-y-transparent border-r-[#555]" />
            <button aria-label="keyframe" className="flex h-4 w-[13px] items-center justify-center border border-[#303030]"><span className="size-[6px] rotate-45 bg-[#2d8ceb]" /></button>
            <button aria-label="next key" className="border-y-[4px] border-l-[6px] border-y-transparent border-l-[#b8b8b8]" />
          </>
        )}
      </div>
      <span className={`size-px bg-[#666] ${indent}`} />
      <span className={`ml-[10px] flex h-[18px] w-4 items-center justify-center ${keyed ? 'border border-[#303030]' : ''}`}><Icon name={keyed ? 'stopwatchOn' : 'stopwatch'} className={`size-[13px] ${keyed ? 'text-[#2d8ceb]' : ''}`} /></span>
      {keyed && <Icon name="curve" className="ml-[4px] size-3" />}
      <span className={`flex h-[19px] flex-1 items-center ${selected ? 'ml-[5px] bg-[#4c4c4c] pl-[3px]' : keyed ? 'ml-[8px]' : 'ml-[5px]'}`}>{label}</span>
      <div className="flex w-[407px] items-center font-['Liberation_Mono',monospace] text-[10px] text-[#2d8ceb]">
        {linked && <Icon name="link" className="ml-[5px] size-3 text-[#a0a0a0]" />}
        <span className="ml-[6px] flex-1 pt-[2px]">{value}</span>
        <Icon name="spiral" className="mr-[85px] mb-[3px] size-[11px] text-[#a8a8a8]" />
      </div>
    </div>
  );
}

const tickXs = [9, 82, 155, 229, 302, 375, 449, 522, 595];
const tickLabels = ['00000', '00050', '00100', '00150', '00200', '00250', '00300', '00350', '00400'];

function GraphView() {
  return (
    <svg width="620" height="253" viewBox="0 0 620 253" className="block shrink-0">
      <clipPath id="ruler"><rect width="602" height="253" /></clipPath>
      <g clipPath="url(#ruler)">
        <rect x="1" width="600" height="10" fill="#000" rx="4" />
        <rect x="9" y="1" width="586" height="8" fill="#6a6a6a" />
        <path d="M9 1H6Q1 1 1 5t5 4h3zM595 1h2q5 0 5 4t-5 4h-2z" fill="#2d8ceb" />
        {tickXs.map((x, i) => (
          <g key={x}>
            <text x={x - 1} y="20" textAnchor="middle" fontSize="10" fill="#999">{tickLabels[i]}</text>
            <path d={`M${x + 0.5} 25v5`} stroke="#888" />
          </g>
        ))}
        <rect y="29" width="602" height="21" fill="#000" />
        <rect x="7" y="30" width="588" height="15" fill="#5f5f5f" />
        <path d="M8 31H5q-3 1-3 5v4q0 4 3 5h3zM595 31h3q3 1 3 5v4q0 4-3 5h-3z" fill="#2d8ceb" />
        <rect x="9" y="46" width="586" height="3" fill="#16c01e" />
        <rect y="50" width="602" height="203" fill="#292929" />
        <rect x="9" y="50" width="586" height="203" fill="#343434" />
        {tickXs.slice(1).map((x) => (
          <path key={x} d={`M${x - 0.5} 50v203`} stroke="#1c1c1c" />
        ))}
        <path d="M0 67.500h602M0 153.500h602M0 239.500h602" stroke="#1c1c1c" />
        <path d="M0 239h3" stroke="#888" strokeWidth="2" />
        <g fontSize="10" fill="#8f8f8f" fontFamily="'Liberation Mono','Noto Sans CJK SC',monospace">
          <text x="11" y="64">100 帧</text>
          <text x="11" y="149">50</text>
          <text x="11" y="235">0</text>
        </g>
        <path d="M165 64h437" stroke="#888" strokeWidth="2" strokeDasharray="3 3" />
        <path d="M9 238C27 217 104 195 140.500 85.500 143 75 152 69 159 65" fill="none" stroke="#c4c4c4" strokeWidth="2" />
        <path d="M104 195l36.500-109.500L143 76" fill="none" stroke="#e0d000" />
        <circle cx="104" cy="195.500" r="2.500" fill="#ffee00" />
        <circle cx="143" cy="76" r="2.500" fill="#ffee00" />
        <rect x="137" y="82" width="7" height="7" fill="#ffee00" />
        <rect x="156.500" y="62.500" width="6" height="6" fill="none" stroke="#ffee00" strokeWidth="1.500" />
        <rect x="6.500" y="237.500" width="6" height="6" fill="none" stroke="#ffee00" strokeWidth="1.500" />
        <path d="M8.500 16v237" stroke="#2d8ceb" />
        <path d="M3 15h11v7l-5.500 7L3 22z" fill="#2d8ceb" />
        <path d="M7 22h3" stroke="#111" />
      </g>
      <path d="M602.500 50v17" stroke="#000" />
      <path d="M606 32h11v9l-5.500 5-5.500-5z" fill="#b0b0b0" />
      <path d="M608 54h9v8h-9z" fill="#b0b0b0" />
      <path d="M609 53l-6 6 6 4" fill="none" stroke="#b0b0b0" />
      <circle cx="609" cy="62" r="3" fill="#232323" stroke="#b0b0b0" strokeWidth="1.500" />
    </svg>
  );
}

const graphTools: { name: string; style?: string }[] = [
  { name: 'eyeMenu' },
  { name: 'list' },
  { name: 'bbox', style: 'bg-[#161616] border border-[#303030] text-[#2d8ceb]' },
  { name: 'magnet', style: 'bg-[#161616] border border-[#303030] text-[#2d8ceb]' },
  { name: 'autoZoom', style: 'ml-[25px] bg-[#161616] border border-[#303030] text-[#2d8ceb]' },
  { name: 'fitSel' },
  { name: 'fitAll' },
  { name: 'separate', style: 'ml-[25px] text-[#404040]' },
  { name: 'diamond', style: 'ml-[25px]' },
  { name: 'kHold' },
  { name: 'kLinear' },
  { name: 'kBezier' },
  { name: 'easy', style: 'ml-[25px]' },
  { name: 'easeIn' },
  { name: 'easeOut' },
];

function Timeline() {
  return (
    <section className="flex min-w-0 flex-1 flex-col border border-b-0 border-[#2d8ceb] bg-[#232323]">
      <div className="flex h-[25px] items-center pl-[25px] text-[#8f8f8f]">
        <button className="flex items-center gap-[13px]"><Swatch />球</button>
        <button className="ml-[39px] flex h-full w-[92px] items-center border-b-2 border-[#b8b8b8] whitespace-nowrap text-[#c8c8c8]">
          <Close />
          <Swatch />
          <span className="mr-auto ml-3">合成 2</span>
          <MenuLines className={tabLines} />
        </button>
      </div>

      <div className="flex flex-1">
        <div className="flex w-[895px] shrink-0 flex-col">
          <div className="flex h-[37px] items-center text-[#a8a8a8]">
            <div className="w-[152px] pl-[10px] whitespace-nowrap">
              <p className="pl-11 text-[14px] leading-4 font-bold text-[#2d8ceb]">00000</p>
              <p className="font-['Liberation_Mono',monospace] text-[10px] leading-[14px] text-[#1b5490]">0:00:00:00 (25.00 fps)</p>
            </div>
            <label className="flex h-5 w-[542px] items-center rounded-[3px] border border-[#303030] bg-[#161616] pl-[6px]">
              <Icon name="searchMenu" />
              <input aria-label="search layers" className="w-full bg-transparent outline-none" />
            </label>
            <button aria-label="mini flowchart" className="ml-4"><Icon name="miniFlow" /></button>
            <button aria-label="draft 3d" className="ml-[17px]"><Icon name="draft" /></button>
            <button aria-label="hide shy" className="ml-[18px]"><Icon name="shyBar" /></button>
            <button aria-label="frame blending" className="ml-[10px]"><Icon name="frames" className="size-[15px]" /></button>
            <button aria-label="motion blur" className="ml-[11px]"><Icon name="balls" /></button>
            <button aria-label="graph editor" className="ml-[18px] text-[#2d8ceb]"><Icon name="graphEd" /></button>
          </div>

          <div className="flex h-5 border-y border-black bg-[#323232] text-[#b8b8b8]">
            <div className={`${cell} w-[67px] gap-[3px] pl-1`}>
              {['eyeSolid', 'speaker', 'dot', 'lock'].map((n) => <Icon key={n} name={n} className="size-3" />)}
              {bar}
            </div>
            <div className={`${cell} w-8 justify-center pl-2`}><Icon name="tag" className="size-3" />{bar}</div>
            <div className={`${cell} w-[34px] pl-[7px] text-[11px] italic`}>#{bar}</div>
            <div className={`${cell} w-[338px] pl-[7px]`}>源名称{bar}</div>
            <div className={`${cell} w-[147px] gap-[3px] pl-[5px]`}>
              {['shy', 'sun', 'dashes'].map((n) => <Icon key={n} name={n} className="size-3" />)}
              <span className="w-3 font-['Liberation_Serif',serif] text-[14px] italic">fx</span>
              {['frames', 'balls', 'half', 'cube'].map((n) => <Icon key={n} name={n} className="size-3" />)}
              {bar}
            </div>
            <div className={`${cell} w-36 pl-[7px]`}>
              <span className="w-[65px]">模式</span>
              <span className="w-[17px] text-[11px] text-[#8f8f8f]">T</span>
              <span className="text-[11px] text-[#8f8f8f]">TrkMat</span>
              {bar}
            </div>
            <div className={`${cell} w-[117px] pl-[7px]`}>父级和链接{bar}</div>
          </div>

          <div className="flex h-[19px] w-[878px] items-center bg-[#484848] text-[#b8b8b8]">
            <div className="flex w-[67px] items-center gap-[2px] pl-1">
              <span className={box}><Icon name="eyeSolid" className="size-3" /></span>
              <span className="w-[13px]" />
              <span className={box} />
              <span className={box} />
            </div>
            <div className="flex w-8 items-center gap-1 pl-[5px]">
              <svg width="9" height="5" viewBox="0 0 9 5" className="shrink-0" aria-hidden="true"><path d="M.5.500l4 4 4-4" fill="none" stroke="#999" /></svg>
              <span className="size-[15px] shrink-0 bg-[#a99776]" />
            </div>
            <div className="w-[34px] pl-2 text-[11px]">1</div>
            <div className="flex h-full w-[338px] items-center gap-1 pl-[2px]">
              <Icon name="film" />
              <span className="flex h-[19px] flex-1 items-center border-2 border-[#a0a0a0] pl-px text-[12px] font-bold">球</span>
            </div>
            <div className="flex w-[147px] items-center gap-[2px] pl-[5px]">
              <span className={box}><Icon name="shy" className="size-3" /></span>
              <span className={box} />
              <span className={box}><Icon name="slash" className="size-3" /></span>
              <span className="w-7" />
              <span className={box} />
              <span className={box} />
              <span className={box} />
            </div>
            <div className="flex w-36 items-center gap-1 pl-1">
              <Select label="模式" value="正常" className="h-[19px] w-[59px]" />
              <span className={box} />
            </div>
            <div className="flex flex-1 items-center gap-[7px] pl-[5px]">
              <Icon name="spiral" className="size-3" />
              <Select label="父级和链接" value="无" className="h-[19px] w-[90px]" />
            </div>
          </div>

          <PropertyRow label="时间重映射" value="00000" indent="ml-[48px]" keyed selected />
          <PropertyRow label="位置" value="25.0,250.0" indent="ml-[68px]" keyed />
          <PropertyRow label="缩放" value="100.0,100.0%" indent="ml-[68px]" linked />

          <div className="mt-auto flex h-[17px] items-center gap-[5px] border-t border-black pl-[5px] text-[#2d8ceb]">
            <button aria-label="switches"><Icon name="swPanel" className="size-[13px]" /></button>
            <button aria-label="modes"><Icon name="modePanel" className="size-[13px]" /></button>
            <button aria-label="in out" className="text-[#999]"><Icon name="inOut" className="size-[13px]" /></button>
          </div>
        </div>

        <div className="flex min-w-0 flex-1 flex-col pt-[7px]">
          <GraphView />
          <div className="flex min-h-0 flex-1 items-center pt-[7px] pl-[62px] text-[#b0b0b0]">
            {graphTools.map(({ name, style = '' }) => (
              <button key={name} aria-label={name} className={`flex h-[21px] w-[25px] shrink-0 items-center justify-center rounded-[3px] ${style}`}><Icon name={name} /></button>
            ))}
          </div>
          <div className="flex h-[17px] w-[109px] items-center border-t border-black text-[#999]">
            <Icon name="hillSmall" className="ml-1 size-[14px]" />
            <Slider label="timeline zoom" value={0} className="ml-[9px] w-12 [&::-webkit-slider-thumb]:mt-[-4px] [&::-webkit-slider-thumb]:size-[10px]" />
            <Icon name="hillBig" className="ml-3 size-4" />
          </div>
        </div>
      </div>
    </section>
  );
}

export default function App() {
  return (
    <main className="flex h-screen min-h-[1000px] flex-col overflow-hidden bg-[#161616] font-['Noto_Sans_CJK_SC',sans-serif] text-[13px] leading-4">
      <MenuBar />
      <ToolBar />
      <div className="mt-1 flex min-h-0 flex-1 gap-1">
        <ProjectPanel />
        <CompPanel />
        <div className="flex w-[173px] shrink-0 flex-col">
          <MotionPanel />
          <CircleAlignPanel />
        </div>
        <div className="flex w-[206px] shrink-0 flex-col">
          <InfoPanel />
          <PreviewPanel />
          <CharacterPanel />
        </div>
      </div>
      <div className="mt-1 flex h-[334px] shrink-0 gap-1">
        <Timeline />
        <AlignPanel />
      </div>
    </main>
  );
}
